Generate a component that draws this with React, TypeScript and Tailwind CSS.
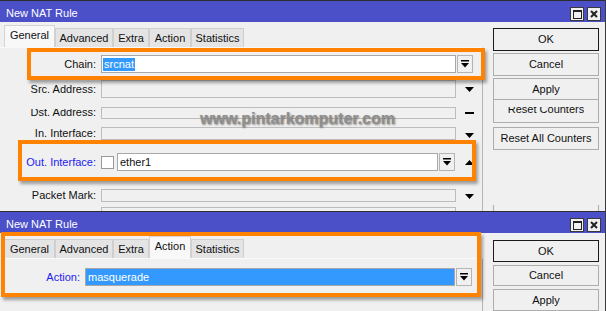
import React from "react";

const TABS = [
  { name: "General", w: "w-[51px]" },
  { name: "Advanced", w: "w-[58px]" },
  { name: "Extra", w: "w-[36px]" },
  { name: "Action", w: "w-[42px]" },
  { name: "Statistics", w: "w-[53px]" },
];

const DownTri = () => (
  <svg width="9" height="5" viewBox="0 0 9 5">
    <path d="M0 0h9L4.5 5z" fill="#000" />
  </svg>
);

const UpTri = () => (
  <svg width="9" height="5" viewBox="0 0 9 5">
    <path d="M0 5h9L4.5 0z" fill="#000" />
  </svg>
);

const DropIcon = () => (
  <svg width="8" height="8" viewBox="0 0 8 8">
    <rect x="0" y="0" width="8" height="1.5" fill="#000" />
    <path d="M0 3h8L4 7.5z" fill="#000" />
  </svg>
);

const DropBtn = ({ h = "h-[18px]" }: { h?: string }) => (
  <div
    className={`w-[16px] ${h} ml-[1px] border border-[#b4b4b4] bg-[#f0f0f0] flex items-center justify-center`}
  >
    <DropIcon />
  </div>
);

const TitleBar = () => (
  <div className="h-[22px] border-t border-[#2e2e2e] bg-[#4b50c8] flex items-center justify-between pl-[6px] pr-[4px]">
    <span className="text-white text-[11px] pt-[3px]">New NAT Rule</span>
    <div className="flex gap-[3px] pt-[5px]">
      <div className="w-[14px] h-[14px] bg-[#f0f0f0] border border-[#3a3a3a] flex items-center justify-center">
        <div className="w-[9px] h-[9px] border border-[#222] border-t-2" />
      </div>
      <div className="w-[14px] h-[14px] bg-[#f0f0f0] border border-[#3a3a3a] flex items-center justify-center">
        <svg width="8" height="8" viewBox="0 0 8 8">
          <path d="M1 1l6 6M7 1l-6 6" stroke="#222" strokeWidth="2" />
        </svg>
      </div>
    </div>
  </div>
);

const Tabs = ({ active, pt }: { active: string; pt: string }) => (
  <div className={`h-[25px] ${pt} pl-[4px] flex items-end`}>
    {TABS.map((t) =>
      t.name === active ? (
        <div
          key={t.name}
          className={`${t.w} h-[22px] bg-[#f8f8f8] border border-b-0 border-[#d4d4d4] flex items-center justify-center text-[11px] pb-[3px]`}
        >
          {t.name}
        </div>
      ) : (
        <div
          key={t.name}
          className={`${t.w} h-[19px] bg-[#e4e4e4] border border-b-0 border-[#cfcfcf] flex items-center justify-center text-[11px]`}
        >
          {t.name}
        </div>
      )
    )}
  </div>
);

const Label = ({
  text,
  blue,
  w = "w-[101px]",
}: {
  text: string;
  blue?: boolean;
  w?: string;
}) => (
  <div
    className={`${w} pr-[5px] text-right text-[11px] ${
      blue ? "text-[#1c1cf0]" : "text-[#111]"
    }`}
  >
    {text}
  </div>
);

const EmptyField = ({ h }: { h: string }) => (
  <div className={`w-[355px] ${h} border border-[#bcbcbc] bg-[#f0f0f0]`} />
);

const Button = ({
  text,
  ok,
  mt,
}: {
  text: string;
  ok?: boolean;
  mt?: string;
}) => (
  <div
    className={`w-[106px] h-[23px] ${mt ?? ""} border ${
      ok ? "border-[#1a1a1a]" : "border-[#adadad]"
    } bg-[#f0f0f0] flex items-center justify-center text-[11px]`}
  >
    {text}
  </div>
);

const Highlight = ({ cls }: { cls: string }) => (
  <div
    className={`absolute ${cls} border-[4px] border-[#ff8300] shadow-[2px_3px_3px_rgba(0,0,0,0.35)] pointer-events-none`}
  />
);

const TopWindow = () => (
  <div className="relative h-[211px] overflow-hidden border-r border-[#3a3a3a]">
    <TitleBar />
    <div className="flex h-[189px]">
      <div className="w-[483px] flex flex-col">
        <Tabs active="General" pt="pt-[3px]" />
        <div className="flex-1 border-t border-[#f8f8f8] border-r border-r-[#b4b4b4] flex flex-col">
          {/* Chain */}
          <div className="flex items-center mt-[7px] h-[18px]">
            <Label text="Chain:" />
            <div className="w-[355px] h-[18px] border border-[#a8a8a8] bg-white flex items-center pl-[1px]">
              <span className="bg-[#3399ff] text-white text-[11px] leading-[13px] px-[1px]">
                srcnat
              </span>
            </div>
            <DropBtn />
          </div>
          {/* Src. Address */}
          <div className="flex items-center mt-[7px] h-[18px]">
            <Label text="Src. Address:" />
            <EmptyField h="h-[18px]" />
            <div className="w-[26px] flex justify-center">
              <DownTri />
            </div>
          </div>
          {/* Dst. Address (cut) */}
          <div className="flex items-start mt-[9px] h-[12px]">
            <div className="w-[101px] mt-[2px] h-[10px] overflow-hidden flex flex-col justify-end">
              <div className="pr-[5px] text-right text-[11px] leading-[13px] text-[#111] shrink-0">
                Dst. Address:
              </div>
            </div>
            <EmptyField h="h-[12px]" />
            <div className="w-[26px] flex justify-center pt-[5px]">
              <div className="w-[9px] h-[2px] bg-black" />
            </div>
          </div>
          {/* In. Interface (cut) */}
          <div className="flex items-start mt-[8px] h-[13px]">
            <div className="w-[101px] mt-[2px] h-[11px] overflow-hidden flex flex-col justify-start">
              <div className="pr-[5px] text-right text-[11px] leading-[13px] text-[#111] shrink-0 -mt-[2px]">
                In. Interface:
              </div>
            </div>
            <EmptyField h="h-[13px]" />
            <div className="w-[26px] flex justify-center pt-[6px]">
              <DownTri />
            </div>
          </div>
          {/* Out. Interface */}
          <div className="flex items-center mt-[13px] h-[18px]">
            <Label text="Out. Interface:" blue />
            <div className="w-[13px] h-[13px] border border-[#9a9a9a] bg-white mr-[3px]" />
            <div className="w-[321px] h-[18px] border border-[#a8a8a8] bg-white flex items-center pl-[2px] text-[11px]">
              ether1
            </div>
            <DropBtn />
            <div className="w-[24px] flex justify-center pl-[4px]">
              <UpTri />
            </div>
          </div>
          {/* Packet Mark */}
          <div className="flex items-center mt-[18px] h-[13px]">
            <Label text="Packet Mark:" />
            <EmptyField h="h-[13px]" />
            <div className="w-[26px] flex justify-center pt-[2px]">
              <DownTri />
            </div>
          </div>
          <div className="flex mt-[5px]">
            <div className="w-[101px]" />
            <EmptyField h="h-[18px]" />
          </div>
        </div>
      </div>
      <div className="flex-1 pl-[10px] pt-[6px] flex flex-col">
        <Button text="OK" ok />
        <Button text="Cancel" mt="mt-[2px]" />
        <Button text="Apply" mt="mt-[2px]" />
        <div className="w-[106px] h-[23px] border-x border-b border-[#adadad] flex flex-col items-center overflow-hidden">
          <div className="mt-[7px] h-[9px] overflow-hidden flex flex-col justify-end">
            <div className="text-[11px] leading-[13px] shrink-0">Reset Counters</div>
          </div>
        </div>
        <Button text="Reset All Counters" mt="mt-[4px]" />
        <div className="w-[106px] h-[6px] mt-[55px] border-x border-[#adadad]" />
      </div>
    </div>
    <Highlight cls="left-[27px] top-[48px] w-[458px] h-[32px]" />
    <Highlight cls="left-[18px] top-[140px] w-[458px] h-[41px]" />
    <div className="absolute left-[200px] top-[107px] text-[16px] font-bold text-[#8e8e8e] [text-shadow:1px_1px_2px_rgba(0,0,0,0.45)]">
      www.pintarkomputer.com
    </div>
  </div>
);

const BottomWindow = () => (
  <div className="relative h-[100px] overflow-hidden border-r border-[#3a3a3a]">
    <TitleBar />
    <div className="flex h-[78px]">
      <div className="w-[483px] flex flex-col">
        <Tabs active="Action" pt="pt-[4px]" />
        <div className="flex-1 border-t border-[#fafafa] border-r border-r-[#b4b4b4] flex flex-col">
          <div className="flex items-center mt-[9px] h-[18px]">
            <Label text="Action:" blue w="w-[85px]" />
            <div className="w-[370px] h-[18px] border border-[#a8a8a8] bg-[#3399ff] flex items-center pl-[2px] text-[11px] text-white">
              masquerade
            </div>
            <DropBtn />
          </div>
        </div>
      </div>
      <div className="flex-1 pl-[10px] pt-[7px] flex flex-col">
        <Button text="OK" ok />
        <Button text="Cancel" mt="mt-[3px]" />
        <Button text="Apply" mt="mt-[3px]" />
      </div>
    </div>
    <Highlight cls="left-[1px] top-[21px] w-[480px] h-[65px]" />
  </div>
);

export default function App() {
  return (
    <div className="w-[606px] h-[311px] overflow-hidden bg-[#f0f0f0] font-['Liberation_Sans',Arial,sans-serif] text-[11px] text-[#111]">
      <TopWindow />
      <BottomWindow />
    </div>
  );
}
